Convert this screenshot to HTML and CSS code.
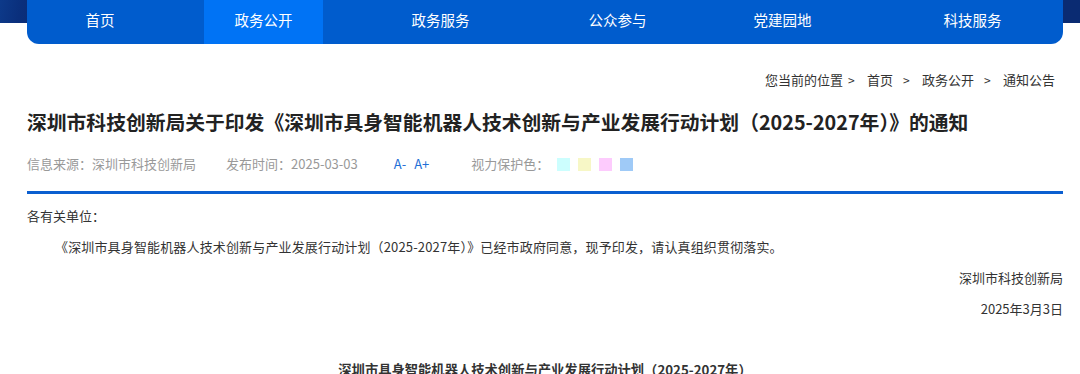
FILE: index.html
```html
<!DOCTYPE html>
<html lang="zh-CN">
<head>
<meta charset="utf-8">
<link rel="stylesheet" href="styles.css">
</head>
<body>
<div class="top">
  <nav class="nav">
    <a class="tab home">首页</a>
    <a class="tab active">政务公开</a>
    <a class="tab">政务服务</a>
    <a class="tab">公众参与</a>
    <a class="tab party">党建园地</a>
    <a class="tab tech">科技服务</a>
  </nav>
</div>
<main class="page">
  <div class="crumbs">
    <span>您当前的位置</span><span class="sep first">&gt;</span>
    <span>首页</span><span class="sep">&gt;</span>
    <span>政务公开</span><span class="sep">&gt;</span>
    <span>通知公告</span>
  </div>
  <h1 class="title">深圳市科技创新局关于印发《深圳市具身智能机器人技术创新与产业发展行动计划（2025-2027年）》的通知</h1>
  <div class="meta">
    <span class="source">信息来源：深圳市科技创新局</span>
    <span class="date">发布时间：2025-03-03</span>
    <span class="fontsize"><a>A-</a><a>A+</a></span>
    <span class="eye">视力保护色：</span>
    <span class="swatches">
      <i class="sw sw1"></i><i class="sw sw2"></i><i class="sw sw3"></i><i class="sw sw4"></i>
    </span>
  </div>
  <div class="content">
    <p>各有关单位：</p>
    <p class="indent">《深圳市具身智能机器人技术创新与产业发展行动计划（2025-2027年）》已经市政府同意，现予印发，请认真组织贯彻落实。</p>
    <p class="right">深圳市科技创新局</p>
    <p class="right">2025年3月3日</p>
    <p class="subtitle">深圳市具身智能机器人技术创新与产业发展行动计划（2025-2027年）</p>
  </div>
</main>
</body>
</html>
```
FILE: styles.css
```css
* { box-sizing: border-box; }
html, body { margin: 0; padding: 0; background: #fff; }
body {
  font-family: "Noto Sans CJK SC", "Noto Sans", sans-serif;
  color: #333;
}
.top {
  background: linear-gradient(to bottom, transparent 0 23px, #fff 23px),
              linear-gradient(100deg, #0d3a8a 0, #0a2f7c 2%, #0b2b73 4%, #0a2b72 100%);
}
.nav {
  margin: 0 17px 0 27px;
  height: 44px;
  background: #005ccd;
  border-radius: 0 0 12px 12px;
  display: flex;
  padding: 0 0 0 29px;
}
.tab {
  display: flex;
  align-items: center;
  width: 119px;
  justify-content: center;
  margin-left: 58px;
  padding-bottom: 5px;
  color: #fff;
  font-size: 14.5px;
}
.tab.home { width: 88px; margin-left: 0; }
.tab.active { background: #0073f5; margin-left: 60px; }
.tab.party { margin-left: 46px; }
.tab.tech { margin-left: 71px; }
.page {
  margin: 0 17px 0 27px;
}
.crumbs {
  display: flex;
  justify-content: flex-end;
  padding-top: 26px;
  padding-right: 8px;
  line-height: 20px;
  font-size: 13px;
  color: #333;
}
.crumbs .sep { width: 7px; margin: 0 12px 0 10px; font-size: 12px; }
.crumbs .sep.first { margin-left: 5px; }
.title {
  margin: 17px 0 0;
  font-size: 19.8px;
  line-height: 30px;
  font-weight: 700;
  color: #222;
}
.meta {
  margin-top: 17px;
  padding-bottom: 17px;
  border-bottom: 3px solid #0b5fd0;
  display: flex;
  align-items: center;
  line-height: 20px;
  font-size: 13px;
  color: #999;
}
.meta .date { margin-left: 30px; }
.fontsize { margin-left: 36px; display: flex; gap: 8px; color: #1f6fd6; }
.eye { margin-left: 42px; }
.swatches { display: flex; gap: 8px; margin-left: 8px; }
.sw { display: block; width: 13px; height: 13px; }
.sw1 { background: #ccfefe; }
.sw2 { background: #f7f7c6; }
.sw3 { background: #fdcbfd; }
.sw4 { background: #9fcaf7; }
.content { padding-top: 6px; font-size: 13px; color: #333; }
.content p { margin: 0; line-height: 31px; }
.content .indent { text-indent: 28px; letter-spacing: 0.15px; }
.content .right { text-align: right; }
.content .subtitle {
  margin-top: 30px;
  text-align: center;
  font-weight: 700;
  font-size: 13.3px;
}
```
